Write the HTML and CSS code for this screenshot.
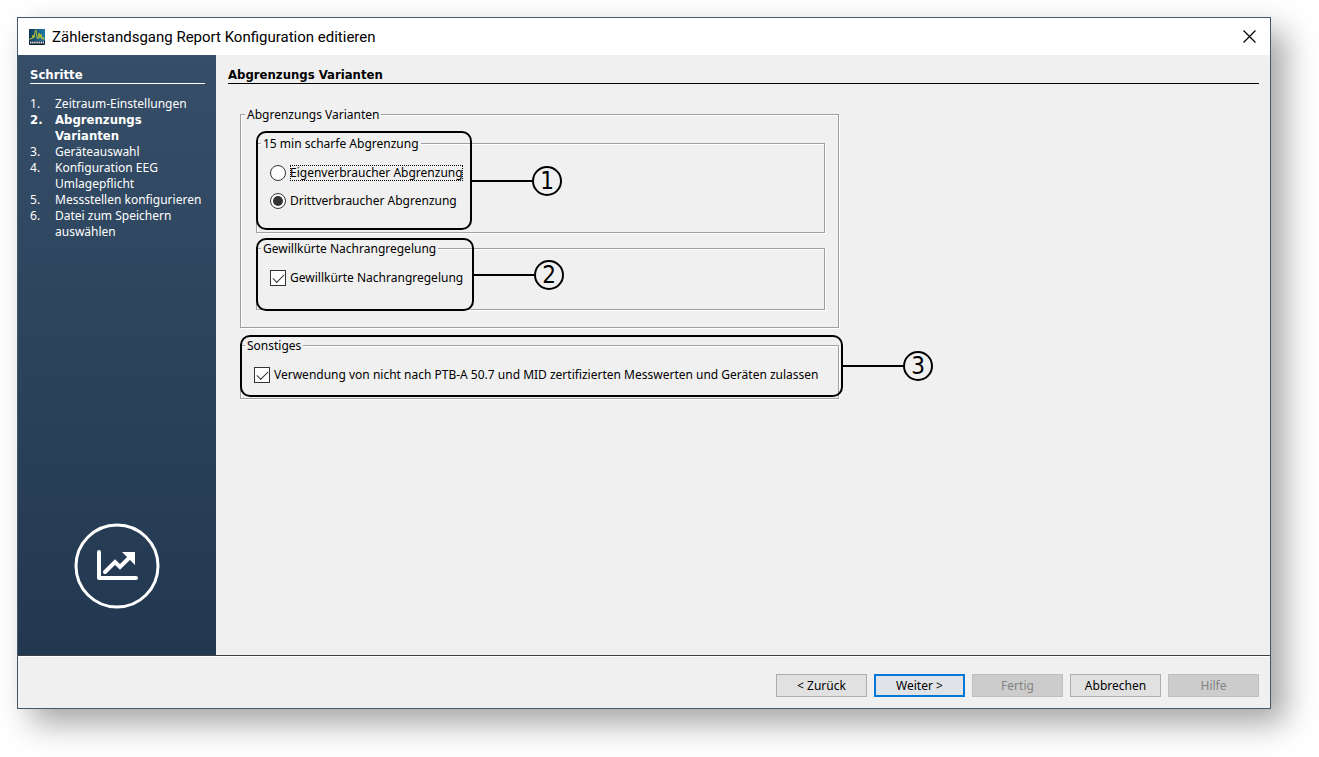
FILE: index.html
```html
<!DOCTYPE html>
<html lang="de">
<head>
  <meta charset="utf-8">
  <title>Zählerstandsgang Report Konfiguration editieren</title>
  <link rel="stylesheet" href="styles.css">
</head>
<body>
  <div class="window">
    <header class="titlebar">
      <svg class="app-icon" viewBox="0 0 16 16">
        <defs>
          <linearGradient id="sky" x1="0" y1="0" x2="1" y2="0">
            <stop offset="0" stop-color="#123a5c"/>
            <stop offset="1" stop-color="#1c7ba6"/>
          </linearGradient>
        </defs>
        <rect width="16" height="16" rx="1" fill="#0b1c2c"/>
        <rect width="16" height="12" rx="1" fill="url(#sky)"/>
        <path d="M1 11l1-2 1 1 1-4 1 3 1-6 1-2 1 8 1 1 1-6 1 5 1-4 1 5 1-2 1 3" fill="none" stroke="#c3c72c" stroke-width="0.9"/>
        <path d="M1 13.5h14" stroke="#dfe4e8" stroke-width="2" stroke-dasharray="1.5 0.6"/>
      </svg>
      <h1>Zählerstandsgang Report Konfiguration editieren</h1>
      <button type="button" class="close" aria-label="Schließen">
        <svg viewBox="0 0 12 12"><path d="M0.5 0.5l11 11M11.5 0.5l-11 11" stroke="#000" stroke-width="1.1"/></svg>
      </button>
    </header>

    <div class="content">
      <aside class="steps">
        <h2>Schritte</h2>
        <ol>
          <li>Zeitraum-Einstellungen</li>
          <li class="current">Abgrenzungs Varianten</li>
          <li>Geräteauswahl</li>
          <li>Konfiguration EEG Umlagepflicht</li>
          <li>Messstellen konfigurieren</li>
          <li>Datei zum Speichern auswählen</li>
        </ol>
        <svg class="chart-logo" viewBox="0 0 86 86" fill="none" stroke="#fff">
          <circle cx="43" cy="43" r="41" stroke-width="3"/>
          <path d="M25 29v26h37" stroke-width="4" stroke-linecap="round" stroke-linejoin="round"/>
          <path d="M31 49l10-10 5 5 10-10" stroke-width="4" stroke-linecap="round"/>
          <path d="M48 29h13v13z" fill="#fff" stroke="none"/>
        </svg>
      </aside>

      <main class="page">
        <h2>Abgrenzungs Varianten</h2>
        <form class="groups" id="wizard">
          <fieldset class="outer">
            <legend>Abgrenzungs Varianten</legend>

            <div class="group">
              <fieldset class="tall">
                <legend>15 min scharfe Abgrenzung</legend>
                <label><input type="radio" name="abgrenzung"><span class="focused">Eigenverbraucher Abgrenzung</span></label>
                <label><input type="radio" name="abgrenzung" checked><span>Drittverbraucher Abgrenzung</span></label>
              </fieldset>
              <div class="callout callout-1">
                <div class="lead"><b>1</b></div>
              </div>
            </div>

            <div class="group">
              <fieldset class="tall">
                <legend>Gewillkürte Nachrangregelung</legend>
                <label><input type="checkbox" checked><span>Gewillkürte Nachrangregelung</span></label>
              </fieldset>
              <div class="callout callout-2">
                <div class="lead"><b>2</b></div>
              </div>
            </div>
          </fieldset>

          <div class="group">
            <fieldset>
              <legend>Sonstiges</legend>
              <label><input type="checkbox" checked><span>Verwendung von nicht nach PTB-A 50.7 und MID zertifizierten Messwerten und Geräten zulassen</span></label>
            </fieldset>
            <div class="callout callout-3">
              <div class="lead"><b>3</b></div>
            </div>
          </div>
        </form>
      </main>
    </div>

    <footer class="buttons">
      <button type="button">&lt; Zurück</button>
      <button type="button" class="default">Weiter &gt;</button>
      <button type="button" disabled>Fertig</button>
      <button type="button">Abbrechen</button>
      <button type="button" disabled>Hilfe</button>
    </footer>
  </div>
</body>
</html>
```
FILE: styles.css
```css
* {
  box-sizing: border-box;
}

body {
  margin: 0;
  padding: 17px 48px 48px 17px;
  min-height: 100vh;
  display: flex;
  background: #fff;
  color: #000;
  font: 12px/16px "Noto Sans", sans-serif;
}

.window {
  flex: 1;
  display: flex;
  flex-direction: column;
  border: 1px solid #43586b;
  background: #f0f0f0;
  box-shadow: 14px 14px 30px rgba(0, 0, 0, 0.36);
}

.titlebar {
  display: flex;
  align-items: center;
  height: 37px;
  padding: 0 14px 0 11px;
  background: #fff;
}

.app-icon {
  width: 16px;
  height: 16px;
  margin-right: 7px;
}

.titlebar h1 {
  flex: 1;
  margin: 0;
  font: 15px/20px Roboto, sans-serif;
}

.close {
  display: flex;
  padding: 0;
  border: none;
  background: none;
}

.close svg {
  width: 13px;
  height: 13px;
}

.content {
  flex: 1;
  display: flex;
  border-bottom: 1px solid #404040;
}

h2 {
  margin: 0;
  border-bottom: 1px solid;
  font: bold 13px/16px "DejaVu Sans Condensed", "DejaVu Sans", sans-serif;
}

/* left step list */
.steps {
  display: flex;
  flex-direction: column;
  width: 198px;
  padding: 12px 11px 46px 12px;
  background: linear-gradient(#364e68, #223850);
  color: #fff;
}

.steps ol {
  margin: 12px 0 0;
  padding: 0;
  list-style: none;
  counter-reset: step;
}

.steps li {
  display: flex;
  counter-increment: step;
}

.steps li::before {
  content: counter(step) ".";
  flex: 0 0 25px;
}

.steps .current {
  padding-right: 48px;
  font: bold 13px/16px "DejaVu Sans Condensed", "DejaVu Sans", sans-serif;
}

.chart-logo {
  width: 86px;
  height: 86px;
  margin: auto 0 0 44px;
}

/* wizard page */
.page {
  flex: 1;
  padding: 12px 11px 12px 12px;
}

.groups {
  display: flex;
  flex-direction: column;
  gap: 10px;
  max-width: 611px;
  margin-top: 23px;
  padding-left: 12px;
}

.group {
  position: relative;
}

fieldset {
  margin: 0;
  padding: 8px 8px 9px 13px;
  border: 1px solid #a0a0a0;
  box-shadow: 1px 1px 0 #fff, inset 1px 1px 0 #fff;
}

fieldset.tall {
  padding-bottom: 17px;
}

fieldset.outer {
  display: flex;
  flex-direction: column;
  gap: 8px;
  padding: 14px 13px 17px 15px;
}

legend {
  margin-left: -9px;
  padding: 0 2px;
  background: #f0f0f0;
  line-height: 15px;
}

.outer > legend {
  margin-left: -11px;
}

label {
  display: flex;
  align-items: center;
  gap: 4px;
  height: 28px;
}

input {
  appearance: none;
  display: grid;
  place-items: center;
  width: 16px;
  height: 16px;
  margin: 0;
  border: 1px solid #333;
  background: #fff;
}

input[type="radio"] {
  border-radius: 50%;
}

input[type="radio"]:checked::after {
  content: "";
  width: 10px;
  height: 10px;
  border-radius: 50%;
  background: #333;
}

input[type="checkbox"]:checked::after {
  content: "";
  width: 10px;
  height: 5px;
  margin-bottom: 3px;
  border: solid #333;
  border-width: 0 0 1px 1px;
  transform: rotate(-45deg);
}

.focused {
  outline: 1px dotted #000;
  outline-offset: -1px;
}

/* numbered markers on top of the form */
.callout {
  position: absolute;
  left: 0;
  border: 2px solid #000;
  border-radius: 10px;
  pointer-events: none;
}

.callout-1 {
  top: -5px;
  width: 216px;
  height: 99px;
}

.callout-2 {
  top: -3px;
  width: 218px;
  height: 73px;
}

.callout-3 {
  top: -3px;
  right: -4px;
  height: 62px;
}

.lead {
  position: absolute;
  top: 0;
  bottom: 0;
  left: 100%;
  display: flex;
  align-items: center;
}

.lead::before {
  content: "";
  width: 62px;
  height: 2px;
  background: #000;
}

.lead b {
  width: 30px;
  height: 30px;
  border: 2px solid #000;
  border-radius: 50%;
  font: 24px/26px "DejaVu Sans Condensed", "DejaVu Sans", sans-serif;
  text-align: center;
}

/* button row */
.buttons {
  display: flex;
  justify-content: flex-end;
  gap: 7px;
  padding: 17px 11px 11px;
  border-top: 1px solid #fff;
}

.buttons button {
  width: 91px;
  height: 23px;
  padding: 0;
  border: 1px solid #adadad;
  background: #e1e1e1;
  color: #000;
  font: inherit;
}

.buttons .default {
  border: 2px solid #0078d7;
  background: #e0e4e8;
}

.buttons button:disabled {
  border-color: #bfbfbf;
  background: #ccc;
  color: #838383;
}
```
